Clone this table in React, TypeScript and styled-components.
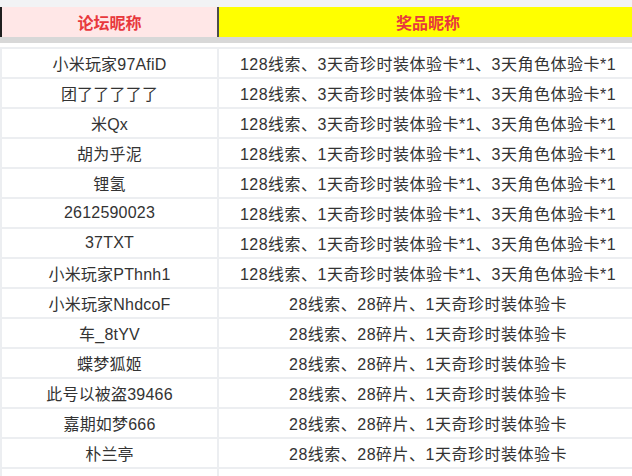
import * as React from 'react';
import styled, { createGlobalStyle } from 'styled-components';

const GlobalStyle = createGlobalStyle`
    html, body {
        margin: 0;
        padding: 0;
        overflow: hidden;
        background: #ffffff;
    }
    body {
        font-family: "Liberation Sans", "Noto Sans CJK SC", sans-serif;
        color: #333333;
    }
`;

const Page = styled.div`
    width: 632px;
    height: 476px;
    overflow: hidden;
`;

const TopStrip = styled.div`
    height: 7px;
    background: #f2f3f5;
`;

const Grid = styled.div`
    display: grid;
    grid-template-columns: 217px 420px;
    width: 637px;
`;

const HeadCell = styled.div<{ $bg: string; $edge: string }>`
    height: 30px;
    display: flex;
    align-items: center;
    justify-content: center;
    background: ${(p) => p.$bg};
    border-left: 2px solid ${(p) => p.$edge};
    box-sizing: border-box;
    font-size: 16px;
    font-weight: bold;
    color: #e8383d;
`;

const Band = styled.div`
    height: 6px;
    background: #d8d8d8;
`;

const Gap = styled.div`
    height: 4px;
    border-bottom: 2px solid #eceef1;
`;

const Cell = styled.div<{ $spacing: number }>`
    height: 30px;
    display: flex;
    align-items: center;
    justify-content: center;
    box-sizing: border-box;
    border-left: 2px solid #eceef1;
    border-bottom: 2px solid #eceef1;
    font-size: 16px;
    letter-spacing: ${(p) => p.$spacing}px;
    white-space: nowrap;
`;

type Winner = {
    name: string;
    prize: string;
};

const big = (day: string) => `128线索、${day}天奇珍时装体验卡*1、3天角色体验卡*1`;
const small = '28线索、28碎片、1天奇珍时装体验卡';

const winners: Winner[] = [
    { name: '小米玩家97AfiD', prize: big('3') },
    { name: '团了了了了了', prize: big('3') },
    { name: '米Qx', prize: big('3') },
    { name: '胡为乎泥', prize: big('1') },
    { name: '锂氢', prize: big('1') },
    { name: '2612590023', prize: big('1') },
    { name: '37TXT', prize: big('1') },
    { name: '小米玩家PThnh1', prize: big('1') },
    { name: '小米玩家NhdcoF', prize: small },
    { name: '车_8tYV', prize: small },
    { name: '蝶梦狐姬', prize: small },
    { name: '此号以被盗39466', prize: small },
    { name: '嘉期如梦666', prize: small },
    { name: '朴兰亭', prize: small },
    { name: '', prize: '' },
];

const App = () => {
    return (
        <Page>
            <GlobalStyle />
            <TopStrip />
            <Grid>
                <HeadCell $bg="#ffe7e7" $edge="#1f1f1f">论坛昵称</HeadCell>
                <HeadCell $bg="#ffff00" $edge="#4d4d4d">奖品昵称</HeadCell>
            </Grid>
            <Band />
            <Gap />
            <Grid>
                {winners.map((val: Winner, key: number) => (
                    <React.Fragment key={key}>
                        <Cell $spacing={0.2}>{val.name}</Cell>
                        <Cell $spacing={0.5}>{val.prize}</Cell>
                    </React.Fragment>
                ))}
            </Grid>
        </Page>
    );
};

export default App;
